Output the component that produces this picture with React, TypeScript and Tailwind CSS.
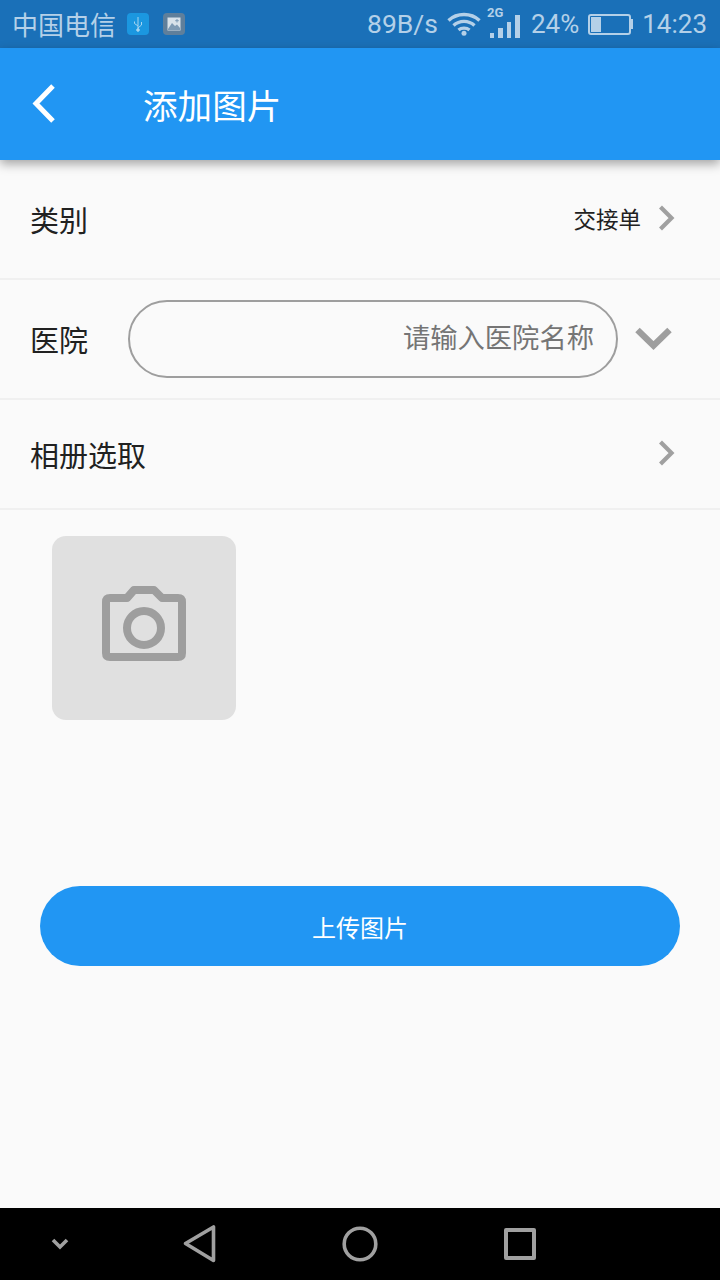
const cjk = { fontFamily: '"Noto Sans CJK SC", sans-serif' };

function Chevron() {
  return (
    <svg width="18" height="26" viewBox="0 0 18 26" className="block">
      <path d="M2.5 2 L13.5 13 L2.5 24" fill="none" stroke="#a0a0a0" strokeWidth="4.2" />
    </svg>
  );
}

function StatusBar() {
  return (
    <div className="h-12 bg-[#1a70b8] flex items-center text-[#b4d0e8] text-[26px]" style={{ fontFamily: 'Roboto, sans-serif' }}>
      <span className="ml-[12px] leading-none" style={cjk}>中国电信</span>
      <div className="ml-[11px] w-[22px] h-[22px] rounded-[4px] bg-[#1b97e0] flex items-center justify-center">
        <svg width="12" height="16" viewBox="0 0 12 16" fill="none" stroke="#a5d4f0" strokeWidth="1">
          <path d="M6 1 V15 M6 10 L2.5 7.5 V5.5 M6 12 L9.5 9 V6" />
          <circle cx="6" cy="14" r="1.3" fill="#a5d4f0" />
        </svg>
      </div>
      <div className="ml-[14px] w-[22px] h-[22px] rounded-[4px] bg-[#5f7f9b] flex items-center justify-center">
        <svg width="14" height="14" viewBox="0 0 14 14">
          <rect x="0.5" y="0.5" width="13" height="13" fill="#d8e2ea" />
          <path d="M1 12 L5 6 L8 9 L10 7.5 L13 11 V13 H1Z" fill="#7d9ab4" />
          <path d="M10 2 V5.5 M8.2 3.7 H11.8" stroke="#7d9ab4" strokeWidth="1" />
        </svg>
      </div>
      <div className="ml-auto flex items-center mr-[13px]">
        <span className="text-[26.5px] leading-none">89B/s</span>
        <svg width="34" height="24" viewBox="0 0 34 24" className="ml-[9px]" fill="none" stroke="#b4d0e8" strokeWidth="3.4">
          <path d="M1.5 8.5 C10 0.5 24 0.5 32.5 8.5" />
          <path d="M6.5 13.5 C12.5 8 21.5 8 27.5 13.5" />
          <path d="M11.5 18 C14.5 15.5 19.5 15.5 22.5 18" />
          <circle cx="17" cy="21.3" r="2.5" fill="#b4d0e8" stroke="none" />
        </svg>
        <div className="ml-[7px] w-[32px] h-[30px] mt-[-2px] relative">
          <span className="absolute left-[-1px] top-[-2px] text-[13px] leading-[14px] font-bold">2G</span>
          <div className="absolute right-0 bottom-0 flex items-end gap-[4px]">
            <div className="w-[4.5px] h-[5px] bg-[#b4d0e8]" />
            <div className="w-[4.5px] h-[10px] bg-[#b4d0e8]" />
            <div className="w-[4.5px] h-[16px] bg-[#b4d0e8]" />
            <div className="w-[4.5px] h-[23px] bg-[#b4d0e8]" />
          </div>
        </div>
        <span className="ml-[11px] text-[26px] leading-none">24%</span>
        <div className="ml-[9px] flex items-center">
          <div className="w-[43px] h-[21px] border-2 border-[#b4d0e8] rounded-[3px] p-[1px]">
            <div className="w-[10px] h-full bg-[#b4d0e8]" />
          </div>
          <div className="w-[2px] h-[10px] bg-[#b4d0e8]" />
        </div>
        <span className="ml-[9px] text-[26px] leading-none">14:23</span>
      </div>
    </div>
  );
}

function Divider() {
  return <div className="h-[2px] bg-[#f0f0f0]" />;
}

export default function App() {
  return (
    <div className="w-[720px] h-[1280px] bg-[#fafafa] flex flex-col overflow-hidden text-[#212121]" style={cjk}>
      <StatusBar />
      <div className="h-[112px] bg-[#2196f3] flex items-center shadow-[0_4px_10px_rgba(0,0,0,0.35)] relative z-10">
        <svg width="28" height="42" viewBox="0 0 28 42" className="ml-[30px] block">
          <path d="M23 3 L6 20.5 L23 38" fill="none" stroke="#fff" strokeWidth="5" />
        </svg>
        <span className="ml-[85px] pt-[1px] text-[34.6px] leading-none text-white">添加图片</span>
      </div>

      <div className="h-[118px] flex items-center pl-[30px] pr-[44px]">
        <span className="text-[29px] leading-none">类别</span>
        <span className="ml-auto pb-[2px] text-[22.5px] leading-none">交接单</span>
        <div className="ml-[17px] mb-[2px]"><Chevron /></div>
      </div>
      <Divider />

      <div className="h-[118px] flex items-center pl-[30px]">
        <span className="text-[29px] leading-none">医院</span>
        <div className="ml-[40px] w-[490px] h-[78px] rounded-full border-2 border-[#9e9e9e] flex items-center justify-end pr-[22px]">
          <span className="pb-[4px] text-[27.3px] leading-none text-[#757575]">请输入医院名称</span>
        </div>
        <svg width="38" height="25" viewBox="0 0 38 25" className="ml-[17px] block">
          <path d="M2.5 3 L18.5 18.5 L34.5 3" fill="none" stroke="#9e9e9e" strokeWidth="6.4" />
        </svg>
      </div>
      <Divider />

      <div className="h-[108px] flex items-center pl-[30px] pr-[44px]">
        <span className="text-[29px] leading-none">相册选取</span>
        <div className="ml-auto mb-[2px]"><Chevron /></div>
      </div>
      <Divider />

      <div className="ml-[52px] mt-[26px] w-[184px] h-[184px] rounded-[14px] bg-[#e0e0e0] pl-[50px] pt-[50px]">
        <svg width="84" height="75" viewBox="0 0 84 75" fill="none" stroke="#9e9e9e" strokeWidth="8" strokeLinejoin="round" className="block">
          <path d="M25 12 L32 4 H52 L60 12 H76 Q80 12 80 16 V67 Q80 71 76 71 H8 Q4 71 4 67 V16 Q4 12 8 12 Z" />
          <circle cx="42" cy="42" r="17" />
        </svg>
      </div>

      <div className="mx-10 mt-[166px] h-20 rounded-full bg-[#2196f3] flex items-center justify-center pt-[1px] text-white text-[24px] leading-none">
        上传图片
      </div>

      <div className="mt-auto h-[72px] bg-black relative">
        <svg width="18" height="12" viewBox="0 0 18 12" className="absolute left-[51px] top-[30px]">
          <path d="M2 2 L9 9 L16 2" fill="none" stroke="#a0a0a0" strokeWidth="3.6" />
        </svg>
        <svg width="34" height="40" viewBox="0 0 34 40" className="absolute left-[183px] top-[16px]">
          <path d="M30.5 3 V36.5 L2.5 19.5 Z" fill="none" stroke="#a0a0a0" strokeWidth="3.6" strokeLinejoin="round" />
        </svg>
        <svg width="36" height="36" viewBox="0 0 36 36" className="absolute left-[342px] top-[18px]">
          <circle cx="18" cy="18" r="15.8" fill="none" stroke="#a0a0a0" strokeWidth="3.6" />
        </svg>
        <div className="absolute left-[504px] top-[20px] w-8 h-8 border-[4px] border-[#a0a0a0] rounded-[2px]" />
      </div>
    </div>
  );
}
